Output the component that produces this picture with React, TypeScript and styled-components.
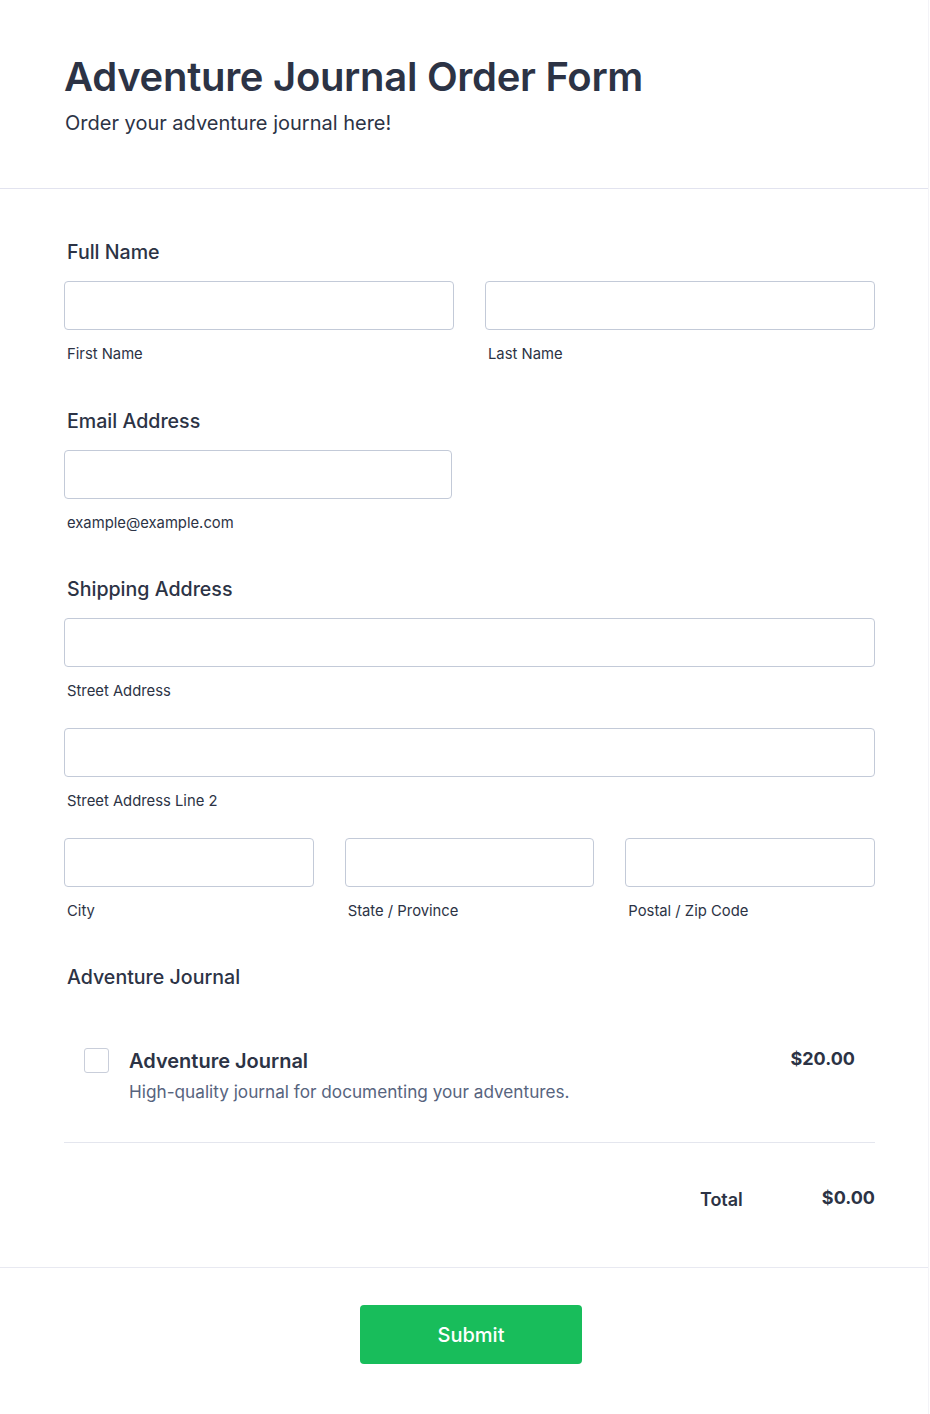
import React from 'react';
import styled, { createGlobalStyle } from 'styled-components';

const GlobalStyle = createGlobalStyle`
  html, body {
    margin: 0;
    padding: 0;
    background: #ffffff;
  }
  body {
    font-family: Inter, "Noto Sans", "Liberation Sans", sans-serif;
    color: #2c3345;
  }
  * {
    box-sizing: border-box;
  }
`;

const App: React.FC = () => {
  return (
    <>
      <GlobalStyle />
      <Card>
        <Header>
          <Title>Adventure Journal Order Form</Title>
          <Subtitle>Order your adventure journal here!</Subtitle>
        </Header>

        <Body>
          <Field>
            <FieldLabel>Full Name</FieldLabel>
            <Row cols={2}>
              <InputBox>
                <Input type="text" />
                <SubLabel>First Name</SubLabel>
              </InputBox>
              <InputBox>
                <Input type="text" />
                <SubLabel>Last Name</SubLabel>
              </InputBox>
            </Row>
          </Field>

          <Field>
            <FieldLabel>Email Address</FieldLabel>
            <EmailWrap>
              <Input type="email" />
              <SubLabel>example@example.com</SubLabel>
            </EmailWrap>
          </Field>

          <Field>
            <FieldLabel>Shipping Address</FieldLabel>
            <AddressStack>
              <InputBox>
                <Input type="text" />
                <SubLabel>Street Address</SubLabel>
              </InputBox>
              <InputBox>
                <Input type="text" />
                <SubLabel>Street Address Line 2</SubLabel>
              </InputBox>
              <Row cols={3}>
                <InputBox>
                  <Input type="text" />
                  <SubLabel>City</SubLabel>
                </InputBox>
                <InputBox>
                  <Input type="text" />
                  <SubLabel>State / Province</SubLabel>
                </InputBox>
                <InputBox>
                  <Input type="text" />
                  <SubLabel>Postal / Zip Code</SubLabel>
                </InputBox>
              </Row>
            </AddressStack>
          </Field>

          <Field>
            <FieldLabel>Adventure Journal</FieldLabel>
            <Product>
              <Checkbox type="checkbox" />
              <ProductInfo>
                <ProductName>Adventure Journal</ProductName>
                <ProductDesc>High-quality journal for documenting your adventures.</ProductDesc>
              </ProductInfo>
              <Price>$20.00</Price>
            </Product>
            <TotalRow>
              <TotalLabel>Total</TotalLabel>
              <TotalValue>$0.00</TotalValue>
            </TotalRow>
          </Field>
        </Body>

        <Footer>
          <SubmitButton type="button">Submit</SubmitButton>
        </Footer>
      </Card>
    </>
  );
};

export default App;

// Styles
const Card = styled.div`
  width: 929px;
  min-height: 1413px;
  background: #ffffff;
  border-right: 1px solid #f3f3f7;
  border-bottom: 1px solid #f3f3f7;
`;

const Header = styled.div`
  padding: 52px 64px 52px;
  border-bottom: 1px solid #e2e3ef;
`;

const Title = styled.h1`
  margin: 0;
  font-size: 40px;
  line-height: 50px;
  font-weight: 600;
  color: #2c3345;
  letter-spacing: -0.3px;
`;

const Subtitle = styled.p`
  margin: 8px 0 0 1px;
  font-size: 20px;
  line-height: 26px;
  font-weight: 400;
  color: #2c3345;
`;

const Body = styled.div`
  padding: 51px 53px 0 64px;
`;

const Field = styled.div`
  margin-bottom: 45px;

  &:first-child {
    margin-bottom: 46px;
  }

  &:last-child {
    margin-bottom: 54px;
  }
`;

const FieldLabel = styled.div`
  font-size: 19.6px;
  line-height: 24px;
  font-weight: 500;
  color: #2c3345;
  margin: 0 0 17px 3px;
`;

const Row = styled.div<{ cols: number }>`
  display: grid;
  grid-template-columns: repeat(${(p) => p.cols}, 1fr);
  column-gap: 31px;
`;

const InputBox = styled.div`
  display: flex;
  flex-direction: column;
`;

const EmailWrap = styled(InputBox)`
  width: 388px;
`;

const AddressStack = styled.div`
  display: flex;
  flex-direction: column;
  gap: 28px;
`;

const Input = styled.input`
  height: 49px;
  width: 100%;
  border: 1px solid #c3cad8;
  border-radius: 4px;
  background: #ffffff;
  font-family: inherit;
  font-size: 16px;
  padding: 0 12px;
  outline: none;
`;

const SubLabel = styled.label`
  margin: 15px 0 0 3px;
  font-size: 14.8px;
  line-height: 18px;
  color: #2c3345;
`;

const Product = styled.div`
  display: flex;
  align-items: flex-start;
  padding: 34px 20px 38px 20px;
  border-bottom: 1px solid #e4e6ee;
`;

const Checkbox = styled.input`
  appearance: none;
  width: 25px;
  height: 25px;
  margin: 8px 20px 0 0;
  border: 1px solid #c9ceda;
  border-radius: 3px;
  background: #ffffff;
  flex-shrink: 0;
`;

const ProductInfo = styled.div`
  flex: 1;
  display: flex;
  flex-direction: column;
`;

const ProductName = styled.div`
  font-size: 20px;
  line-height: 28px;
  font-weight: 600;
  color: #2c3345;
  margin-top: 7px;
`;

const ProductDesc = styled.div`
  margin-top: 5px;
  font-size: 17.2px;
  line-height: 24px;
  color: #57647e;
`;

const Price = styled.div`
  font-size: 18px;
  line-height: 26px;
  font-weight: 700;
  color: #2c3345;
  margin-top: 6px;
`;

const TotalRow = styled.div`
  display: flex;
  justify-content: flex-end;
  align-items: flex-start;
  gap: 79px;
  padding-top: 42px;
`;

const TotalLabel = styled.div`
  font-size: 18px;
  line-height: 26px;
  font-weight: 600;
  color: #2c3345;
  margin-top: 2px;
`;

const TotalValue = styled.div`
  font-size: 18px;
  line-height: 26px;
  font-weight: 700;
  color: #2c3345;
`;

const Footer = styled.div`
  border-top: 1px solid #e8e9f1;
  display: flex;
  justify-content: center;
  padding: 37px 0 50px 14px;
`;

const SubmitButton = styled.button`
  width: 222px;
  height: 59px;
  border: none;
  border-radius: 4px;
  background: #18bd5b;
  color: #ffffff;
  font-family: inherit;
  font-size: 20px;
  font-weight: 500;
  cursor: pointer;
`;
